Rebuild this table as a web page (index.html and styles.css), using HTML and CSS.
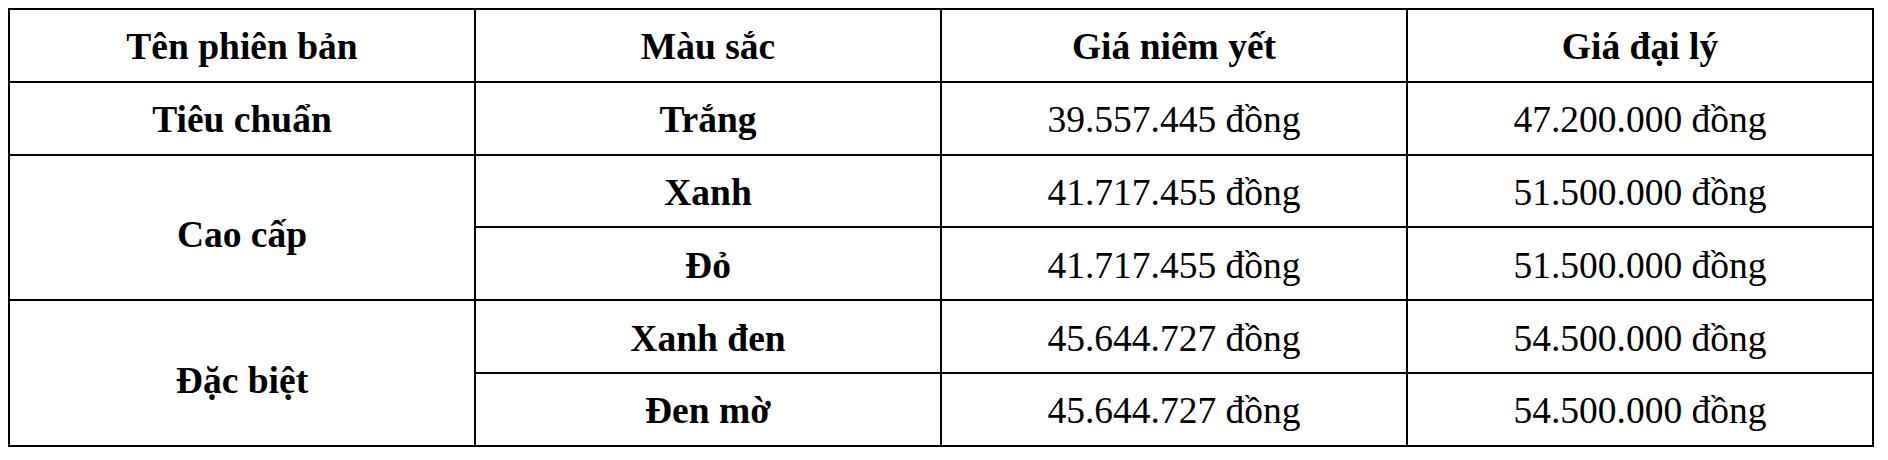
FILE: index.html
```html
<!DOCTYPE html>
<html lang="vi">
<head>
<meta charset="utf-8">
<title>Bảng giá</title>
<link rel="stylesheet" href="styles.css">
</head>
<body>
<table class="price-table">
  <colgroup>
    <col class="col"><col class="col"><col class="col"><col class="col">
  </colgroup>
  <thead>
    <tr>
      <th>Tên phiên bản</th>
      <th>Màu sắc</th>
      <th>Giá niêm yết</th>
      <th>Giá đại lý</th>
    </tr>
  </thead>
  <tbody>
    <tr>
      <td class="strong">Tiêu chuẩn</td>
      <td class="strong">Trắng</td>
      <td>39.557.445 đồng</td>
      <td>47.200.000 đồng</td>
    </tr>
    <tr>
      <td class="strong group" rowspan="2">Cao cấp</td>
      <td class="strong">Xanh</td>
      <td>41.717.455 đồng</td>
      <td>51.500.000 đồng</td>
    </tr>
    <tr>
      <td class="strong">Đỏ</td>
      <td>41.717.455 đồng</td>
      <td>51.500.000 đồng</td>
    </tr>
    <tr>
      <td class="strong group" rowspan="2">Đặc biệt</td>
      <td class="strong">Xanh đen</td>
      <td>45.644.727 đồng</td>
      <td>54.500.000 đồng</td>
    </tr>
    <tr>
      <td class="strong">Đen mờ</td>
      <td>45.644.727 đồng</td>
      <td>54.500.000 đồng</td>
    </tr>
  </tbody>
</table>
</body>
</html>
```
FILE: styles.css
```css
html, body {
  margin: 0;
  padding: 0;
  background: #ffffff;
}

body {
  padding: 8px;
  font-family: "Liberation Serif", "Times New Roman", serif;
  color: #000000;
}

.price-table {
  width: 1866px;
  border-collapse: collapse;
  table-layout: fixed;
}

.price-table th,
.price-table td {
  border: 2px solid #000000;
  height: 72.8px;
  padding: 4px 0 0 0;
  box-sizing: border-box;
  text-align: center;
  vertical-align: middle;
  font-size: 37.5px;
  line-height: 40px;
}

.price-table th,
.price-table td.strong {
  font-weight: bold;
}

.price-table td.group {
  padding-top: 16px;
}
```
